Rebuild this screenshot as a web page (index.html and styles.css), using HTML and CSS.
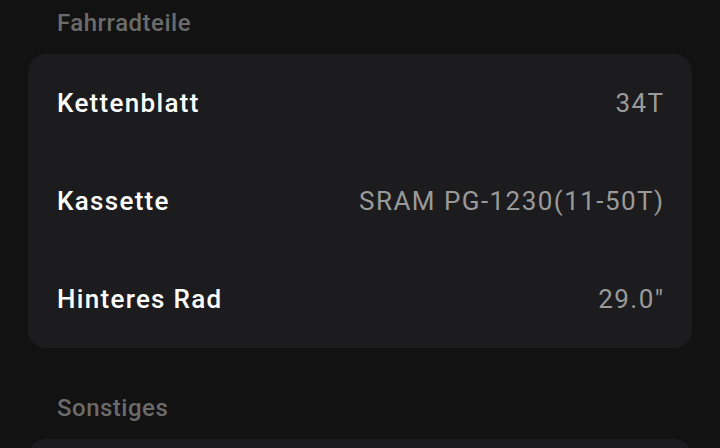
FILE: index.html
```html
<!DOCTYPE html>
<html lang="de">
<head>
    <meta charset="UTF-8">
    <meta name="viewport" content="width=device-width, initial-scale=1.0">
    <title>Fahrrad</title>
    <link rel="stylesheet" href="styles.css">
</head>
<body>
    <div class="page">
        <div class="section">
            <h2 class="section-title">Fahrradteile</h2>
            <div class="card">
                <div class="row">
                    <span class="row-label">Kettenblatt</span>
                    <span class="row-value">34T</span>
                </div>
                <div class="row">
                    <span class="row-label">Kassette</span>
                    <span class="row-value">SRAM PG-1230(11-50T)</span>
                </div>
                <div class="row">
                    <span class="row-label">Hinteres Rad</span>
                    <span class="row-value">29.0"</span>
                </div>
            </div>
        </div>

        <div class="section">
            <h2 class="section-title">Sonstiges</h2>
            <div class="card card-empty"></div>
        </div>
    </div>
</body>
</html>
```

FILE: styles.css
```css
body {
    margin: 0;
    background-color: #121212;
    font-family: Roboto, "Liberation Sans", sans-serif;
    overflow: hidden;
}

.page {
    padding: 9px 28px 0 28px;
    display: flex;
    flex-direction: column;
    gap: 46px;
}

.section-title {
    margin: 0 0 17px 29px;
    font-size: 24px;
    line-height: 28px;
    font-weight: 500;
    letter-spacing: 0.5px;
    color: #6b6b6b;
}

.card {
    background-color: #1c1c1e;
    border-radius: 18px;
    padding: 0 29px;
}

.card-empty {
    height: 98px;
}

.row {
    height: 98px;
    display: flex;
    align-items: center;
    justify-content: space-between;
}

.row-label {
    font-size: 26px;
    font-weight: 500;
    letter-spacing: 1.3px;
    color: #ffffff;
}

.row-value {
    font-size: 26px;
    letter-spacing: 1.45px;
    margin-right: -1.5px;
    color: #9a9a9a;
}
```
